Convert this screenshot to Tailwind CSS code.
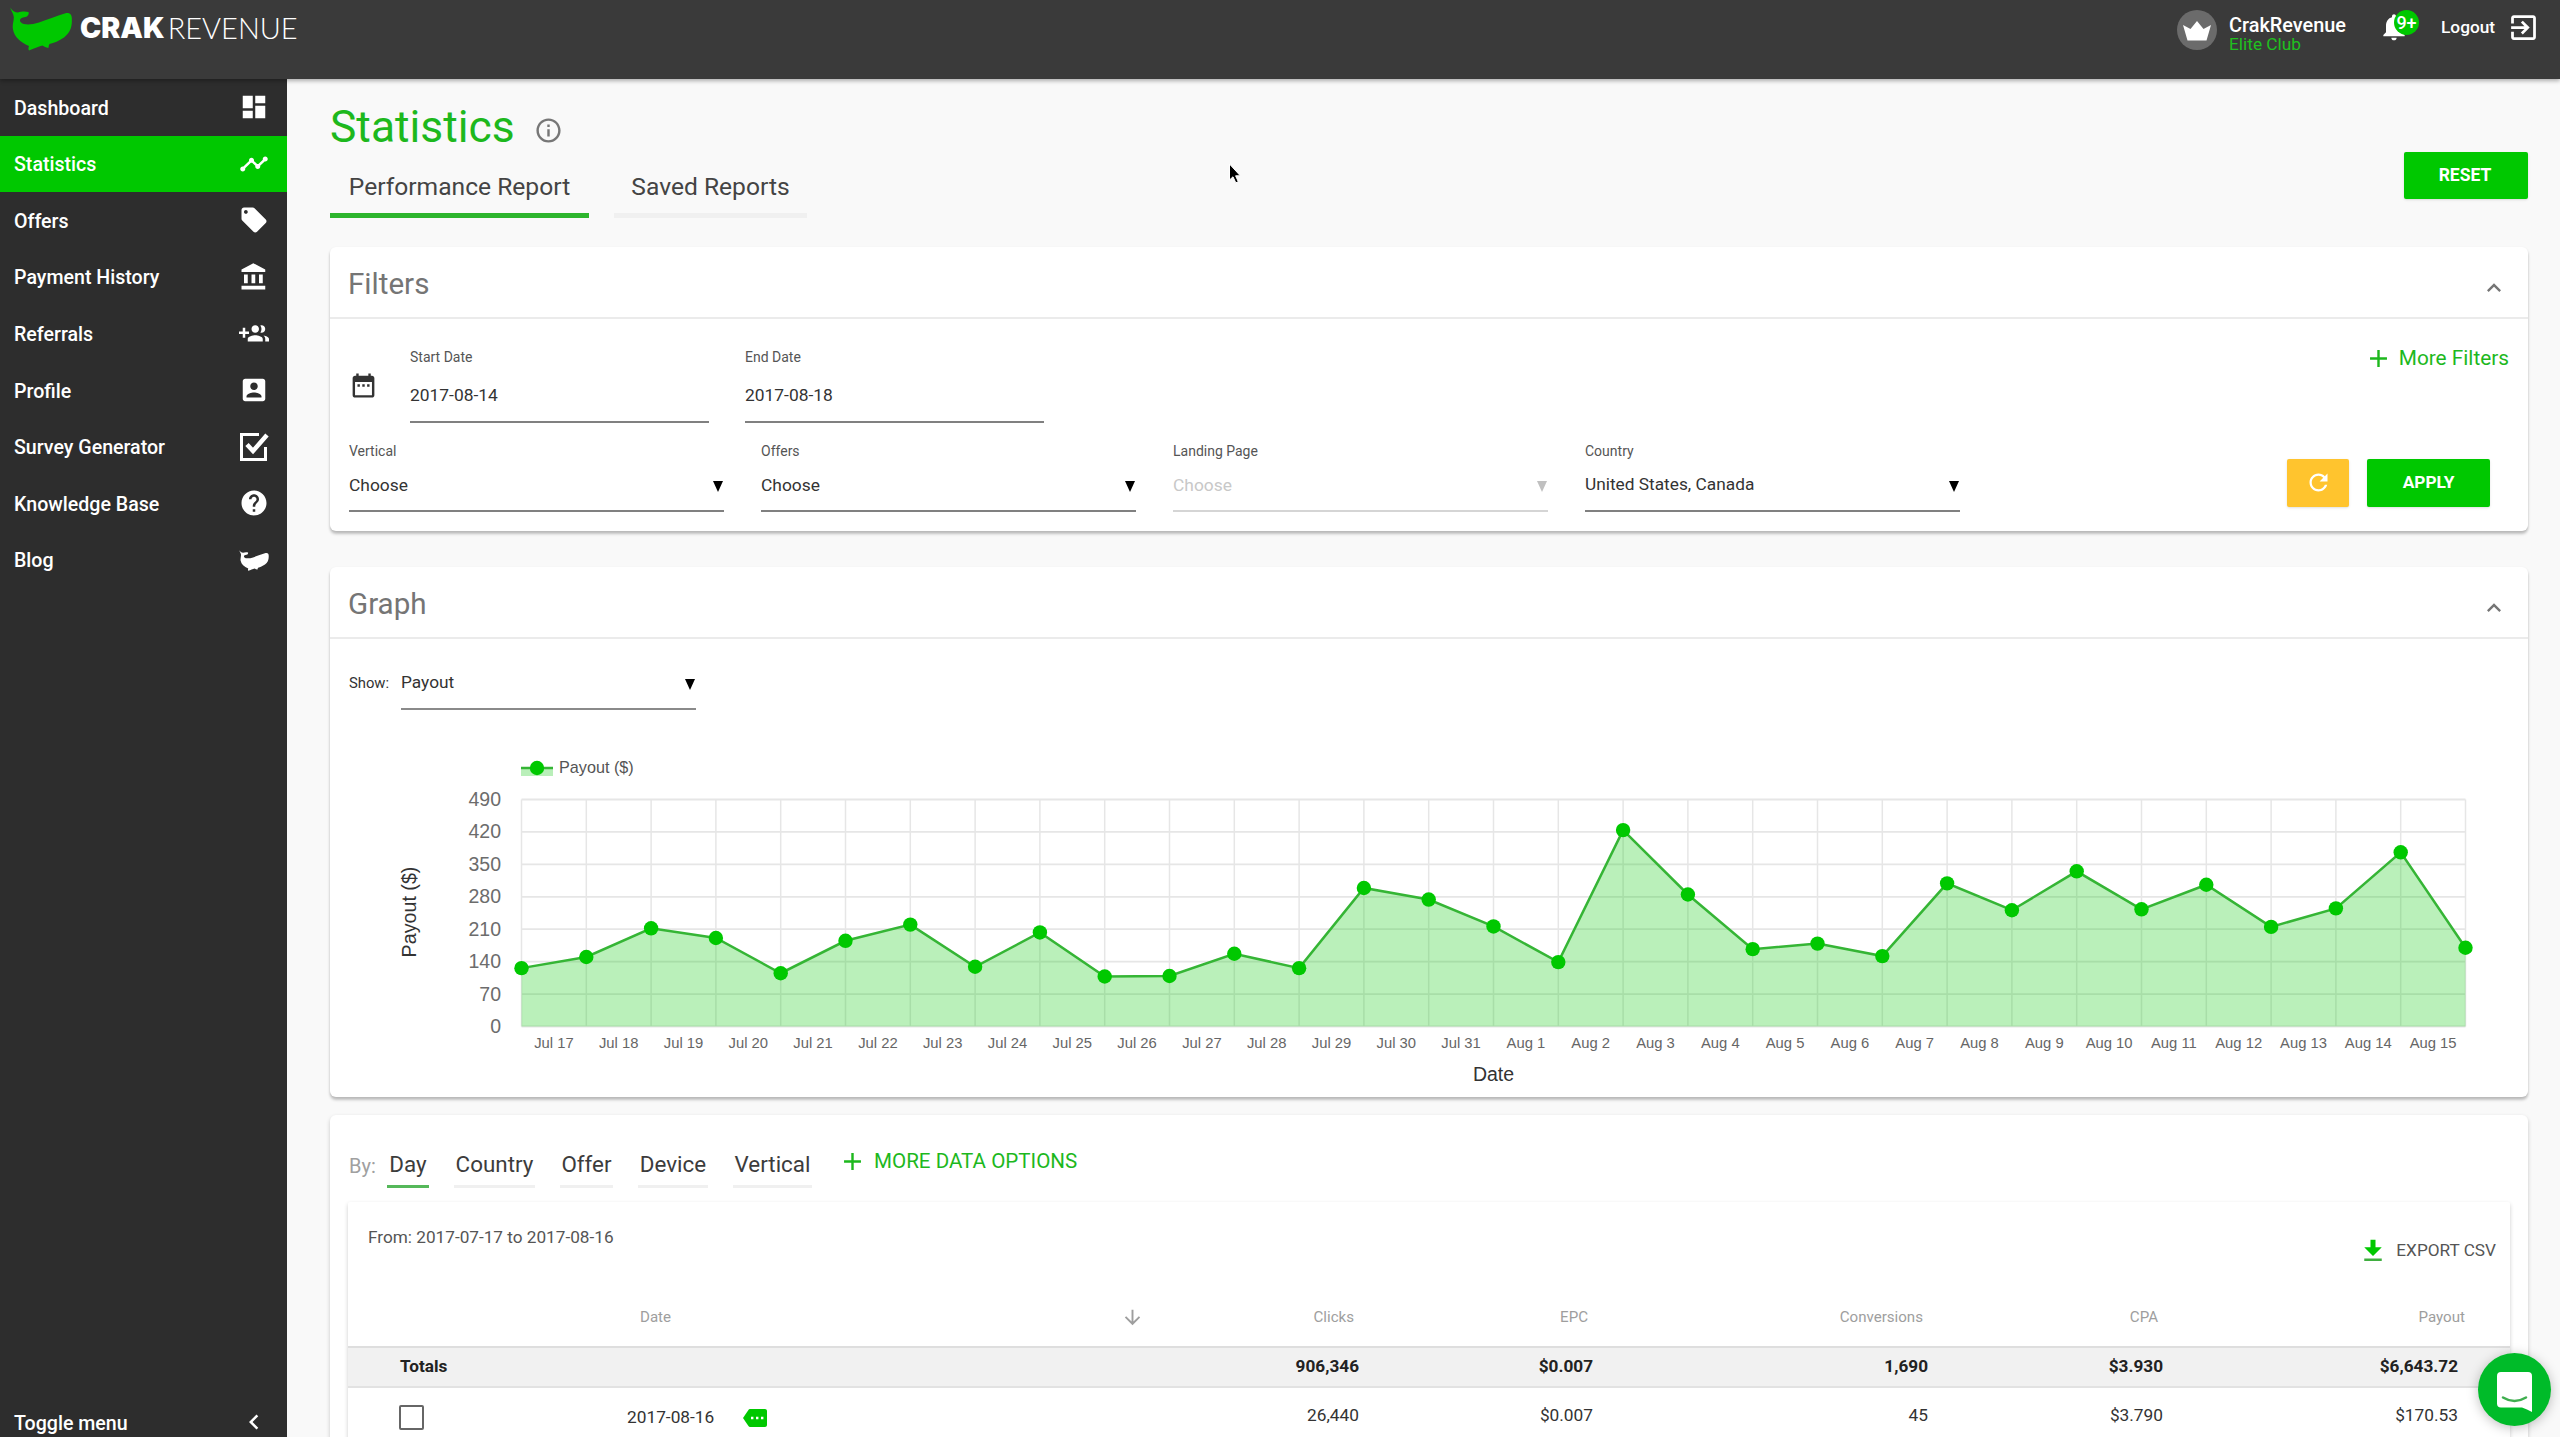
<!DOCTYPE html>
<html lang="en">
    <head>
        <meta charset="UTF-8"/>
        <meta name="viewport" content="width=device-width, initial-scale=1.0"/>
        <title>Statistics - CrakRevenue</title>

        <!-- Tailwind CSS  -->
        <script src="https://cdn.jsdelivr.net/npm/@tailwindcss/browser@4"></script>
    </head>
    <body class="h-[1437px] overflow-hidden bg-[#f9f9f9] font-[Roboto,sans-serif] text-[#333]">

        <!-- shared icons -->
        <svg class="hidden">
            <symbol id="whale" viewBox="0 0 62 44">
                <path d="M.3.5C2 3.800 5 5.500 8 5.500C11 4.500 15 4 18.500 5C19.500 8 17 10.300 13 10.500C10 11.300 9.300 13 10.500 15C14 18.500 21 18 29 15.500C37 13 46 9 55.500 6.300C60 5.300 62 8 61.800 12C62.300 20 60 26 54 30.500C49 34 44 36 39.500 37C38.500 38.500 38.800 40 38.300 41C36 40.500 34 39.500 32.500 38.500C28 39.500 24 41.500 19 43.500C18 42 18.500 40.500 19 39C10 35 4.500 30 3 22.500C2 18 4 14 3.800 10C3.500 6.500 1 4 .3.500Z"/>
            </symbol>
            <symbol id="expand-less" viewBox="0 0 24 24"><path d="M12 8l-6 6 1.410 1.410L12 10.830l4.590 4.580L18 14z"/></symbol>
            <symbol id="add" viewBox="0 0 24 24"><path d="M19 13h-6v6h-2v-6H5v-2h6V5h2v6h6v2z"/></symbol>
            <symbol id="caret" viewBox="0 0 10 11"><path d="M0 0h10L5 11z"/></symbol>
        </svg>

        <header class="relative z-10 flex h-[79px] items-start bg-[#3a3a3a] text-white shadow-[0_2px_4px_rgba(0,0,0,0.3)]">
            <svg class="mt-[7px] ml-[10px] h-[44px] w-[62px] fill-[#00c800]"><use href="#whale"/></svg>
            <div class="mt-[10px] ml-[8px] flex h-9 items-center leading-9">
                <span class="font-[Inter,sans-serif] text-[28.500px] font-black">CRAK</span>
                <span class="ml-[3px] font-[Lato,sans-serif] text-[29px] font-light">REVENUE</span>
            </div>

            <div class="ml-auto flex items-start">
                <div class="mt-[10px] flex size-10 items-center justify-center rounded-full bg-[#6b6b6b]">
                    <svg class="mt-[2px] h-5 w-[28px] fill-white" viewBox="0 0 28 20"><path d="M0 4l7.500 4L14 0l6.500 8L28 4l-4.500 15.500h-19z"/></svg>
                </div>
                <div class="mt-[15px] ml-[12px] w-[154px]">
                    <div class="text-[19.900px] leading-[22px] font-medium">CrakRevenue</div>
                    <div class="text-[17.300px] leading-[14px] text-[#1fc01f]">Elite Club</div>
                </div>
                <div class="relative mt-[11px] w-[58px]">
                    <svg class="-ml-[5px] size-8 fill-white" viewBox="0 0 24 24"><path d="M12 22c1.100 0 2-.9 2-2h-4c0 1.100.89 2 2 2zm6-6v-5c0-3.070-1.640-5.640-4.500-6.320V4c0-.83-.67-1.500-1.500-1.500s-1.500.67-1.500 1.500v.68C7.630 5.360 6 7.920 6 11v5l-2 2v1h16v-1l-2-2z"/></svg>
                    <span class="absolute -top-px left-[11px] flex size-[25px] items-center justify-center rounded-full bg-[#00c800] text-[18px] font-medium">9+</span>
                </div>
                <span class="mt-[15px] w-[66px] text-[17.300px] leading-6 font-medium">Logout</span>
                <svg class="mt-[11px] mr-[20px] size-[33px] fill-white" viewBox="0 0 24 24"><path d="M10.090 15.590L11.500 17l5-5-5-5-1.410 1.410L12.670 11H3v2h9.670l-2.580 2.590zM19 3H5c-1.110 0-2 .9-2 2v4h2V5h14v14H5v-4H3v4c0 1.100.89 2 2 2h14c1.100 0 2-.9 2-2V5c0-1.100-.9-2-2-2z"/></svg>
            </div>
        </header>

        <div class="flex h-[1358px]">
            <aside class="flex w-[287px] shrink-0 flex-col bg-[#2d2d2d] text-[19.600px] font-medium text-white">
                <a class="flex h-[56.600px] items-center justify-between pr-[18px] pl-[14px]"><span class="pt-[2px]">Dashboard</span>
                    <svg class="size-[30px] fill-current" viewBox="0 0 24 24"><path d="M3 13h8V3H3v10zm0 8h8v-6H3v6zm10 0h8V11h-8v10zm0-18v6h8V3h-8z"/></svg>
                </a>
                <a class="flex h-[56.600px] items-center justify-between bg-[#00c800] pr-[18px] pl-[14px]"><span class="pt-[2px]">Statistics</span>
                    <svg class="size-[30px] fill-current" viewBox="0 0 24 24"><path d="M23 8c0 1.100-.9 2-2 2-.18 0-.35-.02-.51-.07l-3.560 3.550c.05.16.07.34.07.52 0 1.100-.9 2-2 2s-2-.9-2-2c0-.18.02-.36.07-.52l-2.550-2.550c-.16.05-.34.07-.52.07s-.36-.02-.52-.07l-4.550 4.560c.05.16.07.33.07.51 0 1.100-.9 2-2 2s-2-.9-2-2 .9-2 2-2c.18 0 .35.02.51.07l4.560-4.550C8.020 9.360 8 9.180 8 9c0-1.100.9-2 2-2s2 .9 2 2c0 .18-.02.36-.07.52l2.550 2.550c.16-.05.34-.07.52-.07s.36.02.52.07l3.550-3.560C19.020 8.350 19 8.180 19 8c0-1.100.9-2 2-2s2 .9 2 2z"/></svg>
                </a>
                <a class="flex h-[56.600px] items-center justify-between pr-[18px] pl-[14px]"><span class="pt-[2px]">Offers</span>
                    <svg class="size-[30px] fill-current" viewBox="0 0 24 24"><path d="M21.410 11.580l-9-9C12.050 2.220 11.550 2 11 2H4c-1.100 0-2 .9-2 2v7c0 .55.22 1.050.59 1.420l9 9c.36.36.86.58 1.410.58.55 0 1.050-.22 1.410-.59l7-7c.37-.36.59-.86.59-1.410 0-.55-.23-1.060-.59-1.420zM5.500 7C4.670 7 4 6.330 4 5.500S4.670 4 5.500 4 7 4.670 7 5.500 6.330 7 5.500 7z"/></svg>
                </a>
                <a class="flex h-[56.600px] items-center justify-between pr-[18px] pl-[14px]"><span class="pt-[2px]">Payment History</span>
                    <svg class="size-[30px] fill-current" viewBox="0 0 24 24"><path d="M4 10v7h3v-7H4zm6 0v7h3v-7h-3zM2 22h19v-3H2v3zm14-12v7h3v-7h-3zm-4.500-9L2 6v2h19V6l-9.500-5z"/></svg>
                </a>
                <a class="flex h-[56.600px] items-center justify-between pr-[18px] pl-[14px]"><span class="pt-[2px]">Referrals</span>
                    <svg class="size-[30px] fill-current" viewBox="0 0 24 24"><path d="M8 10H5V7H3v3H0v2h3v3h2v-3h3v-2zm10 1c1.660 0 2.990-1.340 2.990-3S19.660 5 18 5c-.32 0-.63.05-.91.14.57.81.9 1.790.9 2.860s-.34 2.040-.9 2.860c.28.09.59.14.91.14zm-5 0c1.660 0 2.990-1.340 2.990-3S14.660 5 13 5c-1.660 0-3 1.340-3 3s1.340 3 3 3zm6.620 2.160c.83.73 1.380 1.660 1.380 2.840v2h3v-2c0-1.540-2.370-2.490-4.380-2.840zM13 13c-2 0-6 1-6 3v2h12v-2c0-2-4-3-6-3z"/></svg>
                </a>
                <a class="flex h-[56.600px] items-center justify-between pr-[18px] pl-[14px]"><span class="pt-[2px]">Profile</span>
                    <svg class="size-[30px] fill-current" viewBox="0 0 24 24"><path d="M3 5v14c0 1.100.89 2 2 2h14c1.100 0 2-.9 2-2V5c0-1.100-.9-2-2-2H5c-1.110 0-2 .9-2 2zm12 4c0 1.660-1.340 3-3 3s-3-1.340-3-3 1.340-3 3-3 3 1.340 3 3zm-9 8c0-2 4-3.100 6-3.100s6 1.100 6 3.100v1H6v-1z"/></svg>
                </a>
                <a class="flex h-[56.600px] items-center justify-between pr-[18px] pl-[14px]"><span class="pt-[2px]">Survey Generator</span>
                    <svg class="size-[30px] fill-none stroke-current" viewBox="0 0 30 30" stroke-width="3"><path d="M20 2.500H2.500v25h24V15"/><path d="M8 12.500l6 6.500L28 3" stroke-width="4.500"/></svg>
                </a>
                <a class="flex h-[56.600px] items-center justify-between pr-[18px] pl-[14px]"><span class="pt-[2px]">Knowledge Base</span>
                    <svg class="size-[30px] fill-current" viewBox="0 0 24 24"><path d="M12 2C6.480 2 2 6.480 2 12s4.480 10 10 10 10-4.480 10-10S17.520 2 12 2zm1 17h-2v-2h2v2zm2.070-7.750l-.9.920C13.450 12.900 13 13.500 13 15h-2v-.5c0-1.100.45-2.100 1.170-2.830l1.240-1.260c.37-.36.59-.86.59-1.410 0-1.100-.9-2-2-2s-2 .9-2 2H8c0-2.210 1.790-4 4-4s4 1.790 4 4c0 .88-.36 1.680-.93 2.250z"/></svg>
                </a>
                <a class="flex h-[56.600px] items-center justify-between pr-[18px] pl-[14px]"><span class="pt-[2px]">Blog</span>
                    <svg class="h-[21px] w-[30px] fill-current"><use href="#whale"/></svg>
                </a>
                <a class="mt-auto flex h-[30px] items-center justify-between pr-[18px] pl-[14px]"><span class="pt-[4px]">Toggle menu</span>
                    <svg class="mb-px size-[30px] fill-current" viewBox="0 0 24 24"><path d="M15.410 7.410L14 6l-6 6 6 6 1.410-1.410L10.830 12z"/></svg>
                </a>
            </aside>

            <main class="flex min-w-0 flex-1 flex-col pr-[32px] pl-[43px]">
                <div class="flex justify-between">
                    <div class="pt-[18px]">
                        <div class="flex h-[60px] items-center gap-[19px]">
                            <h1 class="text-[44.400px] leading-[60px] text-[#1db81d]">Statistics</h1>
                            <svg class="mt-[7px] size-[29px] fill-[#777]" viewBox="0 0 24 24"><path d="M11 17h2v-6h-2v6zm1-15C6.480 2 2 6.480 2 12s4.480 10 10 10 10-4.480 10-10S17.520 2 12 2zm0 18c-4.410 0-8-3.590-8-8s3.590-8 8-8 8 3.590 8 8-3.590 8-8 8zM11 9h2V7h-2v2z"/></svg>
                        </div>
                        <div class="flex h-[61px] gap-[25px] text-[24.600px] text-[#444]">
                            <a class="flex w-[259px] items-center justify-center border-b-[5px] border-[#2db52d] pt-[5px]">Performance Report</a>
                            <a class="flex w-[193px] items-center justify-center border-b-[5px] border-[#f0f0f0] pt-[5px]">Saved Reports</a>
                        </div>
                    </div>
                    <button class="mt-[73px] h-[47px] w-[124px] rounded-xs bg-[#00c800] pr-[2px] text-[17.500px] font-bold text-white shadow-sm">RESET</button>
                </div>

                <!-- Filters -->
                <section class="mt-[29px] h-[284px] shrink-0 rounded-md bg-white shadow-[0_3px_3px_rgba(0,0,0,0.22),0_1px_3px_rgba(0,0,0,0.08)]">
                    <div class="flex h-[72px] items-center justify-between border-b-2 border-[#ebebeb] pr-5 pl-[18px]">
                        <h2 class="pt-[5px] text-[29.600px] text-[#757575]">Filters</h2>
                        <svg class="mt-3 size-[28px] fill-[#757575]"><use href="#expand-less"/></svg>
                    </div>
                    <div class="flex items-start pt-[31px] pr-[19px] pl-[19px] text-[17.400px]">
                        <svg class="mt-[21px] mr-[32px] size-[29px] fill-[#333]" viewBox="0 0 24 24"><path d="M9 11H7v2h2v-2zm4 0h-2v2h2v-2zm4 0h-2v2h2v-2zm2-7h-1V2h-2v2H8V2H6v2H5c-1.110 0-1.990.9-1.990 2L3 20c0 1.100.89 2 2 2h14c1.100 0 2-.9 2-2V6c0-1.100-.9-2-2-2zm0 16H5V9h14v11z"/></svg>
                        <div class="w-[299px]">
                            <label class="block text-[14px] leading-[15px] text-[#555]">Start Date</label>
                            <div class="flex h-[58px] items-center border-b-2 border-[#808080] pt-[5px]">2017-08-14</div>
                        </div>
                        <div class="ml-[36px] w-[299px]">
                            <label class="block text-[14px] leading-[15px] text-[#555]">End Date</label>
                            <div class="flex h-[58px] items-center border-b-2 border-[#808080] pt-[5px]">2017-08-18</div>
                        </div>
                        <a class="ml-auto flex h-[17px] items-center gap-[6px] text-[20.800px] text-[#1db81d]">
                            <svg class="size-[29px] fill-current"><use href="#add"/></svg>More Filters
                        </a>
                    </div>
                    <div class="flex items-start gap-[37px] pt-[20px] pr-[38px] pl-[19px] text-[17.400px]">
                        <div class="w-[375px]">
                            <label class="block text-[14px] leading-4 text-[#555]">Vertical</label>
                            <div class="flex h-[53px] items-center justify-between border-b-2 border-[#808080] pt-px">Choose<svg class="mt-[3px] mr-px h-[11px] w-[10px] fill-black"><use href="#caret"/></svg></div>
                        </div>
                        <div class="w-[375px]">
                            <label class="block text-[14px] leading-4 text-[#555]">Offers</label>
                            <div class="flex h-[53px] items-center justify-between border-b-2 border-[#808080] pt-px">Choose<svg class="mt-[3px] mr-px h-[11px] w-[10px] fill-black"><use href="#caret"/></svg></div>
                        </div>
                        <div class="w-[375px]">
                            <label class="block text-[14px] leading-4 text-[#555]">Landing Page</label>
                            <div class="flex h-[53px] items-center justify-between border-b-2 border-[#d5d5d5] pt-px text-[#c8c8c8]">Choose<svg class="mt-[3px] mr-px h-[11px] w-[10px] fill-[#c0c0c0]"><use href="#caret"/></svg></div>
                        </div>
                        <div class="w-[375px]">
                            <label class="block text-[14px] leading-4 text-[#555]">Country</label>
                            <div class="flex h-[53px] items-center justify-between border-b-2 border-[#808080] pt-px text-[17.300px]">United States, Canada<svg class="mt-[3px] mr-px h-[11px] w-[10px] fill-black"><use href="#caret"/></svg></div>
                        </div>
                        <div class="mt-4 ml-auto flex gap-[18px]">
                            <button class="flex h-[48px] w-[62px] items-center justify-center rounded-xs bg-[#ffc42e] shadow-sm">
                                <svg class="mb-[2px] size-[27px] fill-white" viewBox="0 0 24 24"><path d="M17.650 6.350C16.200 4.900 14.210 4 12 4c-4.420 0-7.990 3.580-7.990 8s3.570 8 7.990 8c3.730 0 6.840-2.550 7.730-6h-2.080c-.82 2.330-3.040 4-5.650 4-3.310 0-6-2.690-6-6s2.690-6 6-6c1.660 0 3.140.69 4.220 1.780L13 11h7V4l-2.350 2.350z"/></svg>
                            </button>
                            <button class="h-[48px] w-[123px] rounded-xs bg-[#00c800] text-[17.300px] font-bold text-white shadow-sm">APPLY</button>
                        </div>
                    </div>
                </section>

                <!-- Graph -->
                <section class="mt-[36px] h-[530px] shrink-0 rounded-md bg-white shadow-[0_3px_3px_rgba(0,0,0,0.22),0_1px_3px_rgba(0,0,0,0.08)]">
                    <div class="flex h-[72px] items-center justify-between border-b-2 border-[#ebebeb] pr-5 pl-[18px]">
                        <h2 class="pt-[5px] text-[29.600px] text-[#757575]">Graph</h2>
                        <svg class="mt-3 size-[28px] fill-[#757575]"><use href="#expand-less"/></svg>
                    </div>
                    <div class="flex h-[72px] items-start pt-[17px] pl-[19px]">
                        <label class="w-[52px] text-[14.800px] leading-[54px]">Show:</label>
                        <div class="flex h-[54px] w-[295px] items-center justify-between border-b-2 border-[#8a8a8a] pt-px text-[17.300px]">Payout<svg class="mt-[3px] mr-px h-[11px] w-[10px] fill-black"><use href="#caret"/></svg></div>
                    </div>
                    <svg id="chart" class="h-[386px] w-[2198px] font-['Liberation_Sans',sans-serif]" viewBox="330 711 2198 386"></svg>
                </section>

                <!-- Report table -->
                <section class="mt-[18px] flex-1 rounded-t-md bg-white shadow-[0_2px_4px_rgba(0,0,0,0.2)]">
                    <div class="flex h-[87px] items-start pt-[24px] pl-[19px] text-[22.400px] text-[#3c3c3c]">
                        <span class="mt-[12px] w-[38px] text-[20px] leading-[30px] text-[#a0a0a0]">By:</span>
                        <div class="mt-[6px] flex gap-[25px]">
                            <a class="flex h-[43px] w-[42px] items-center justify-center border-b-3 border-[#55b85a]">Day</a>
                            <a class="flex h-[43px] w-[81px] items-center justify-center border-b-3 border-[#f0f0f0]">Country</a>
                            <a class="flex h-[43px] w-[53px] items-center justify-center border-b-3 border-[#f0f0f0]">Offer</a>
                            <a class="flex h-[43px] w-[70px] items-center justify-center border-b-3 border-[#f0f0f0]">Device</a>
                            <a class="flex h-[43px] w-[79px] items-center justify-center border-b-3 border-[#f0f0f0]">Vertical</a>
                        </div>
                        <a class="mt-[7px] ml-[26px] flex h-[30px] items-center gap-[7px] text-[20.600px] text-[#1db81d]">
                            <svg class="size-[29px] fill-current"><use href="#add"/></svg>MORE DATA OPTIONS
                        </a>
                    </div>
                    <div class="mx-[18px] h-[240px] rounded-t-xs bg-white shadow-[0_2px_4px_rgba(0,0,0,0.2)]">
                        <div class="flex h-[86px] items-start justify-between pr-[14px] pl-5 text-[17.200px] text-[#555]">
                            <span class="mt-[23px] leading-6">From: 2017-07-17 to 2017-08-16</span>
                            <a class="mt-[34px] flex h-[30px] items-center gap-[8px]">
                                <svg class="size-[30px]" viewBox="0 0 24 24"><path class="fill-[#00c800]" d="M15.500 9H14V3h-4v6H5l7 7 7-7z"/><path class="fill-[#3fae3f]" d="M5 18h14v2H5z"/></svg>EXPORT CSV
                            </a>
                        </div>
                        <div class="grid h-[60px] grid-cols-[279px_505px_227px_234px_335px_235px_295px] items-center border-b-2 border-[#dedede] text-right text-[15.100px] text-[#9e9e9e]">
                            <span></span>
                            <span class="-mr-3 flex items-center justify-between pl-[13px]">Date
                                <svg class="size-[23px] fill-current" viewBox="0 0 24 24"><path d="M20 12l-1.410-1.410L13 16.170V4h-2v12.170l-5.580-5.590L4 12l8 8 8-8z"/></svg>
                            </span>
                            <span class="pr-[5px]">Clicks</span>
                            <span class="pr-[5px]">EPC</span>
                            <span class="pr-[5px]">Conversions</span>
                            <span class="pr-[5px]">CPA</span>
                            <span class="-mr-[7px]">Payout</span>
                        </div>
                        <div class="grid h-[40px] grid-cols-[279px_505px_227px_234px_335px_235px_295px] items-center border-b-2 border-[#e2e2e2] bg-[#f1f1f1] text-right text-[17.200px] font-bold text-[#222]">
                            <span class="pl-[52px] text-left">Totals</span>
                            <span></span>
                            <span>906,346</span>
                            <span>$0.007</span>
                            <span>1,690</span>
                            <span>$3.930</span>
                            <span>$6,643.72</span>
                        </div>
                        <div class="grid h-[55px] grid-cols-[279px_505px_227px_234px_335px_235px_295px] items-center text-right text-[17.300px]">
                            <span class="ml-[51px] mt-[3px] size-[25px] rounded-xs border-2 border-[#666]"></span>
                            <span class="flex items-center gap-[29px] pt-[4px]">2017-08-16
                                <svg class="size-6" viewBox="0 0 24 24"><path class="fill-[#00c800]" d="M22 3H7c-.69 0-1.230.35-1.590.88L0 12l5.410 8.110c.36.53.97.89 1.660.89H22c1.100 0 2-.9 2-2V5c0-1.100-.9-2-2-2z"/><path class="fill-white" d="M8 10.800h2.400v2.400H8zM13 10.800h2.400v2.400H13zM18 10.800h2.400v2.400H18z"/></svg>
                            </span>
                            <span>26,440</span>
                            <span>$0.007</span>
                            <span>45</span>
                            <span>$3.790</span>
                            <span>$170.53</span>
                        </div>
                    </div>
                </section>
            </main>
        </div>

        <!-- chat launcher -->
        <div class="fixed top-[1353px] left-[2478px] z-20 flex size-[73px] items-center justify-center rounded-full bg-[#00bb29] shadow-[0_2px_12px_rgba(0,0,0,0.25)]">
            <svg class="mt-1 h-[40px] w-[35px]" viewBox="0 0 35 40"><path class="fill-white" d="M4 0h27a4 4 0 0 1 4 4v36q-5-3-10-4.500H4a4 4 0 0 1-4-4V4a4 4 0 0 1 4-4z"/><path class="fill-none stroke-[#3fae4f]" stroke-width="2.500" stroke-linecap="round" d="M6 25.500q11.500 7 23 0"/></svg>
        </div>

        <!-- pointer -->
        <svg class="fixed top-[163px] left-[1228px] z-20 h-[22px] w-[16px]" viewBox="0 0 16 22"><path class="fill-black stroke-white" d="M1.500 1v16l3.500-3.200 2.800 6 2.500-1.100-2.700-5.900h4.700z"/></svg>

        <script>
            const payouts = [126, 150, 212, 191, 115, 185, 220, 129, 203, 108, 109, 157, 126, 299, 274, 216, 139, 424, 285, 167, 179, 152, 309, 251, 335, 253, 306, 215, 255, 376, 170];
            const left = 521.5, right = 2465.5, top_ = 799.5, bottom = 1026.5;
            const step = (right - left) / 30;
            const y = v => bottom - v / 490 * (bottom - top_);

            let svg = '';
            let date = new Date(2017, 6, 17);
            for (let i = 0; i <= 30; i++)
            {
                const x = left + i * step;
                svg += `<path d="M${x} ${top_}V${bottom}" stroke="#e6e6e6" stroke-width="1.500"/>`;
                if (i < 30)
                {
                    const label = (date.getMonth() == 6 ? 'Jul ' : 'Aug ') + date.getDate();
                    svg += `<text x="${x + step / 2}" y="1047.500" text-anchor="middle" font-size="14.800" fill="#666">${label}</text>`;
                    date.setDate(date.getDate() + 1);
                }
            }
            for (let v = 0; v <= 490; v += 70)
            {
                svg += `<path d="M${left} ${y(v)}H${right}" stroke="#e6e6e6" stroke-width="1.800"/>`;
                svg += `<text x="501" y="${y(v) + 6.5}" text-anchor="end" font-size="19.500" fill="#6c6c6c">${v}</text>`;
            }

            const points = payouts.map((v, i) => `${left + i * step},${y(v)}`);
            svg += `<polygon points="${left},${bottom} ${points.join(' ')} ${right},${bottom}" fill="#00c800" fill-opacity=".27"/>`;
            svg += `<polyline points="${points.join(' ')}" fill="none" stroke="#35b535" stroke-width="2.500"/>`;
            payouts.forEach((v, i) => svg += `<circle cx="${left + i * step}" cy="${y(v)}" r="7.200" fill="#00c800"/>`);

            // legend and axis titles
            svg += `<path d="M521 768h32v8h-32z" fill="#b9efb9"/><path d="M521 768h32" stroke="#35b535" stroke-width="2.500"/><circle cx="537" cy="768" r="7.200" fill="#00c800"/>`;
            svg += `<text x="559" y="773" font-size="16.200" fill="#555">Payout ($)</text>`;
            svg += `<text transform="translate(415.500 912) rotate(-90)" text-anchor="middle" font-size="19.700" fill="#333">Payout ($)</text>`;
            svg += `<text x="1493.500" y="1080.500" text-anchor="middle" font-size="19.500" fill="#333">Date</text>`;
            document.getElementById('chart').innerHTML = svg;
        </script>
    </body>
</html>
